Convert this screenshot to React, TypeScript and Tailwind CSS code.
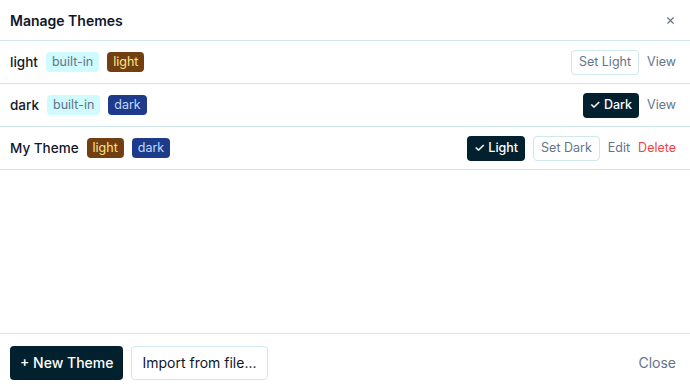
import { X } from "lucide-react";

type Theme = {
  name: string;
  builtIn: boolean;
  light: boolean;
  dark: boolean;
  activeLight: boolean;
  activeDark: boolean;
};

const THEMES: Theme[] = [
  { name: "light", builtIn: true, light: true, dark: false, activeLight: false, activeDark: false },
  { name: "dark", builtIn: true, light: false, dark: true, activeLight: false, activeDark: true },
  { name: "My Theme", builtIn: false, light: true, dark: true, activeLight: true, activeDark: false },
];

function Badge({ kind }: { kind: "built-in" | "light" | "dark" }) {
  const cls =
    kind === "built-in"
      ? "bg-[#cffafe] text-[#64748b]"
      : kind === "light"
        ? "bg-[#713f12] text-[#fde68a]"
        : "bg-[#1e3a8a] text-[#bfdbfe]";
  return <span className={`text-[12.5px] leading-5 h-5 px-1.5 rounded ${cls}`}>{kind}</span>;
}

function ActiveBtn({ label }: { label: string }) {
  return (
    <button className="h-[25px] px-[7px] rounded bg-[#03202e] text-white text-[12.5px] font-medium">
      ✓ {label}
    </button>
  );
}

function SetBtn({ label }: { label: string }) {
  return (
    <button className="h-[25px] px-[7px] rounded border border-[#cfe8ee] text-[#64748b] text-[12.5px] bg-white">
      {label}
    </button>
  );
}

export default function App() {
  return (
    <div className="w-[690px] h-[389px] bg-white flex flex-col text-[#0f172a]" style={{ fontFamily: "Inter, 'Noto Sans', sans-serif" }}>
      <div className="h-[41px] flex items-center justify-between pl-2.5 pr-3.5 border-b border-[#cfe8ee] shrink-0">
        <h2 className="text-[14px] font-semibold">Manage Themes</h2>
        <X size={11} strokeWidth={2.5} className="text-[#64748b]" />
      </div>

      <div className="flex-1">
        {THEMES.map((t) => (
          <div key={t.name} className="h-[43px] flex items-center pl-2.5 pr-3.5 border-b border-[#cfe8ee]">
            <div className="flex items-center gap-2 flex-1">
              <span className="text-[13.5px] font-medium">{t.name}</span>
              {t.builtIn && <Badge kind="built-in" />}
              {t.light && <Badge kind="light" />}
              {t.dark && <Badge kind="dark" />}
            </div>
            <div className="flex items-center gap-2 text-[12.5px]">
              {t.light && (t.activeLight ? <ActiveBtn label="Light" /> : <SetBtn label="Set Light" />)}
              {t.dark && (t.activeDark ? <ActiveBtn label="Dark" /> : <SetBtn label="Set Dark" />)}
              {t.builtIn ? (
                <span className="text-[#64748b]">View</span>
              ) : (
                <>
                  <span className="text-[#64748b]">Edit</span>
                  <span className="text-[#f43f3f]">Delete</span>
                </>
              )}
            </div>
          </div>
        ))}
      </div>

      <div className="h-[56px] border-t border-[#cfe8ee] flex items-center pl-2.5 pr-3.5 gap-2 shrink-0 pt-0.5">
        <button className="h-[34px] px-2.5 rounded bg-[#03202e] text-white text-[14px] font-medium">+ New Theme</button>
        <button className="h-[34px] px-2.5 rounded border border-[#cfe8ee] text-[14px] text-[#0f172a] bg-white">
          Import from file...
        </button>
        <span className="ml-auto text-[14px] text-[#64748b]">Close</span>
      </div>
    </div>
  );
}
